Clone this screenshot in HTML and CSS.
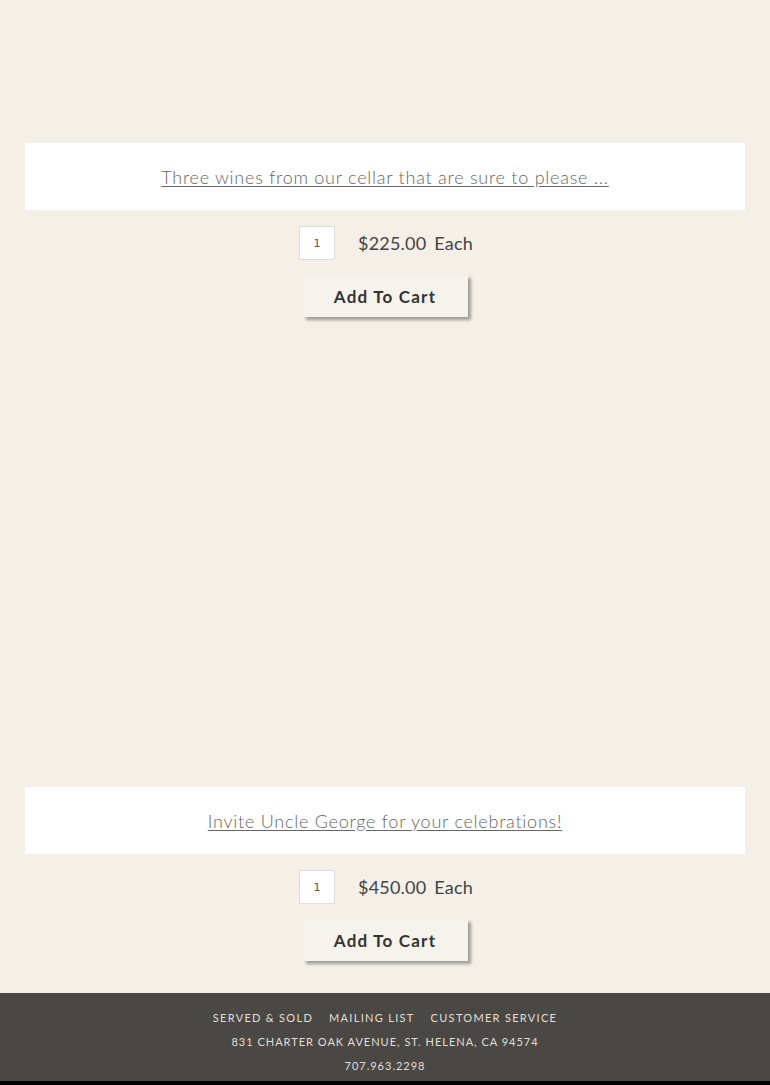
FILE: index.html
```html
<!DOCTYPE html>
<html lang="en">
<head>
    <meta charset="UTF-8">
    <meta name="viewport" content="width=device-width, initial-scale=1.0">
    <title>Gift Sets</title>
    <link rel="stylesheet" href="styles.css">
</head>
<body>

<div class="products">
    <div class="product">
        <div class="product-image short"></div>
        <div class="product-title">
            <a href="#">Three wines from our cellar that are sure to please ...</a>
        </div>
        <form class="buy-row">
            <input type="text" class="qty" value="1">
            <span class="price">$225.00</span>
            <span class="unit">Each</span>
        </form>
        <button class="add-btn">Add To Cart</button>
    </div>

    <div class="product">
        <div class="product-image"></div>
        <div class="product-title">
            <a href="#">Invite Uncle George for your celebrations!</a>
        </div>
        <form class="buy-row">
            <input type="text" class="qty" value="1">
            <span class="price">$450.00</span>
            <span class="unit">Each</span>
        </form>
        <button class="add-btn">Add To Cart</button>
    </div>
</div>

<footer>
    <nav class="footer-links">
        <a href="#">Served &amp; Sold</a>
        <a href="#">Mailing List</a>
        <a href="#">Customer Service</a>
    </nav>
    <p>831 Charter Oak Avenue, St. Helena, CA 94574</p>
    <p>707.963.2298</p>
</footer>

</body>
</html>
```

FILE: styles.css
```css
body {
    font-family: 'Lato', 'Liberation Sans', sans-serif;
    background-color: #f4efe7;
    color: #444;
    margin: 0;
    padding: 0;
}
.product {
    display: flex;
    flex-direction: column;
    align-items: center;
    margin-bottom: 32px;
}
.product-image {
    height: 438px;
    align-self: stretch;
}
.product-image.short {
    height: 143px;
}
.product-title {
    align-self: stretch;
    margin: 0 25px;
    height: 67px;
    background-color: #fff;
    display: flex;
    align-items: center;
    justify-content: center;
}
.product-title a {
    color: #666;
    font-size: 18px;
    font-weight: 300;
    letter-spacing: 0.75px;
    text-decoration: underline;
    text-underline-offset: 2px;
}
.buy-row {
    display: flex;
    align-items: center;
    margin-top: 16px;
    margin-left: 2px;
}
.qty {
    width: 34px;
    height: 32px;
    padding: 0;
    border: 1px solid #ddd;
    background-color: #fff;
    text-align: center;
    font-family: 'DejaVu Sans', sans-serif;
    font-size: 11px;
    color: #555;
}
.price {
    margin-left: 23px;
    font-size: 18px;
    color: #444;
    letter-spacing: 0.2px;
}
.unit {
    margin-left: 8px;
    font-size: 18px;
    color: #444;
    letter-spacing: 0.2px;
}
.add-btn {
    margin-top: 15px;
    width: 165px;
    height: 42px;
    border: none;
    background-color: #f6f2ec;
    box-shadow: 3px 3px 3px rgba(0, 0, 0, 0.35);
    font-family: 'Lato', sans-serif;
    font-size: 17px;
    font-weight: bold;
    color: #333;
    letter-spacing: 1.2px;
    cursor: pointer;
}
footer {
    background-color: #4a4844;
    color: #e2ded7;
    padding: 6px 0 3px;
    text-align: center;
    font-size: 11px;
    text-transform: uppercase;
    letter-spacing: 1px;
    border-bottom: 4px solid #000;
}
footer p {
    margin: 0;
    line-height: 24px;
}
.footer-links {
    display: flex;
    justify-content: center;
    gap: 16px;
    line-height: 24px;
    padding-top: 7px;
}
.footer-links a {
    color: #e2ded7;
    text-decoration: none;
    letter-spacing: 1.3px;
}
```
